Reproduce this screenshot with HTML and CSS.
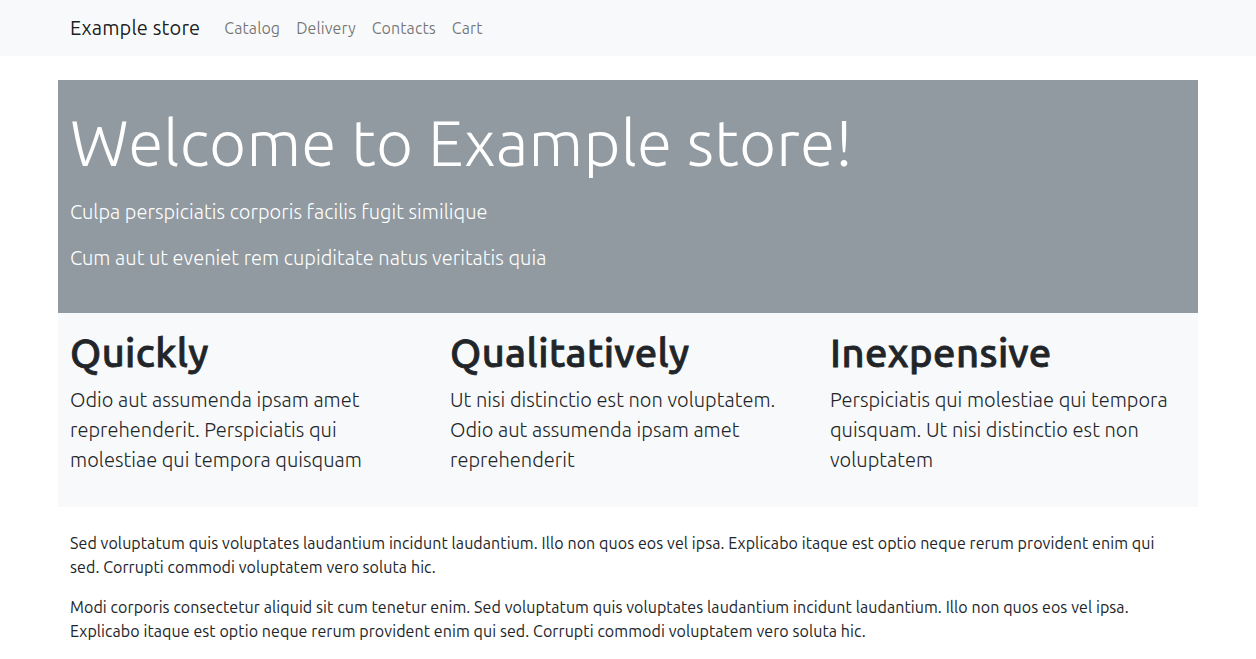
FILE: index.html
```html
<!DOCTYPE html>
<html lang="en">
<head>
<meta charset="utf-8">
<title>Example store</title>
<link rel="stylesheet" href="styles.css">
</head>
<body>
<header class="navbar">
  <div class="container nav-inner">
    <a class="brand" href="#">Example store</a>
    <nav class="nav-links">
      <a href="#">Catalog</a>
      <a href="#">Delivery</a>
      <a href="#">Contacts</a>
      <a href="#">Cart</a>
    </nav>
  </div>
</header>
<main class="container main">
  <section class="hero">
    <h1 class="hero-title">Welcome to Example store!</h1>
    <p class="lead">Culpa perspiciatis corporis facilis fugit similique</p>
    <p class="lead">Cum aut ut eveniet rem cupiditate natus veritatis quia</p>
  </section>
  <section class="features">
    <div class="feature">
      <h2>Quickly</h2>
      <p>Odio aut assumenda ipsam amet reprehenderit. Perspiciatis qui molestiae qui tempora quisquam</p>
    </div>
    <div class="feature">
      <h2>Qualitatively</h2>
      <p>Ut nisi distinctio est non voluptatem. Odio aut assumenda ipsam amet reprehenderit</p>
    </div>
    <div class="feature">
      <h2>Inexpensive</h2>
      <p>Perspiciatis qui molestiae qui tempora quisquam. Ut nisi distinctio est non voluptatem</p>
    </div>
  </section>
  <section class="content">
    <p>Sed voluptatum quis voluptates laudantium incidunt laudantium. Illo non quos eos vel ipsa. Explicabo itaque est optio neque rerum provident enim qui sed. Corrupti commodi voluptatem vero soluta hic.</p>
    <p>Modi corporis consectetur aliquid sit cum tenetur enim. Sed voluptatum quis voluptates laudantium incidunt laudantium. Illo non quos eos vel ipsa. Explicabo itaque est optio neque rerum provident enim qui sed. Corrupti commodi voluptatem vero soluta hic.</p>
  </section>
</main>
</body>
</html>
```
FILE: styles.css
```css
* { box-sizing: border-box; }
html, body { margin: 0; padding: 0; }
body {
  font-family: "Ubuntu", "Open Sans", "Noto Sans", sans-serif;
  font-size: 16px;
  line-height: 1.5;
  color: #212529;
  background: #fff;
  letter-spacing: 0.08px;
}
.container {
  width: 1140px;
  margin: 0 auto;
}
.navbar {
  background: #f8f9fa;
  height: 56px;
}
.nav-inner {
  display: flex;
  align-items: center;
  height: 56px;
  padding: 0 12px;
}
.brand {
  font-size: 20px;
  line-height: 30px;
  color: rgba(0,0,0,0.9);
  text-decoration: none;
  margin-right: 16px;
  letter-spacing: 0.15px;
}
.nav-links {
  display: flex;
}
.nav-links a {
  padding: 8px;
  color: rgba(0,0,0,0.55);
  text-decoration: none;
}
.main {
  margin-top: 24px;
}
.hero {
  background: #919aa0;
  color: #fff;
  padding: 24px 12px;
}
.hero-title {
  font-size: 64px;
  font-weight: 300;
  line-height: 1.2;
  margin: 0 0 16px;
  letter-spacing: 0.15px;
}
.lead {
  font-size: 20px;
  font-weight: 300;
  line-height: 30px;
  margin: 0 0 16px;
  letter-spacing: 0.04px;
}
.features {
  background: #f8f9fa;
  display: grid;
  grid-template-columns: repeat(3, 1fr);
  padding: 16px 0;
}
.feature {
  padding: 0 12px;
}
.feature h2 {
  font-family: "Ubuntu Medium", "Ubuntu", "Open Sans", sans-serif;
  font-size: 40px;
  font-weight: 500;
  line-height: 1.2;
  margin: 0 0 8px;
  letter-spacing: 0.4px;
  -webkit-text-stroke: 0.8px #212529;
}
.feature p {
  font-size: 20px;
  font-weight: 300;
  line-height: 30px;
  margin: 0 0 16px;
  letter-spacing: 0.04px;
}
.content {
  padding: 24px 12px 0;
}
.content p {
  margin: 0 0 16px;
}
```
